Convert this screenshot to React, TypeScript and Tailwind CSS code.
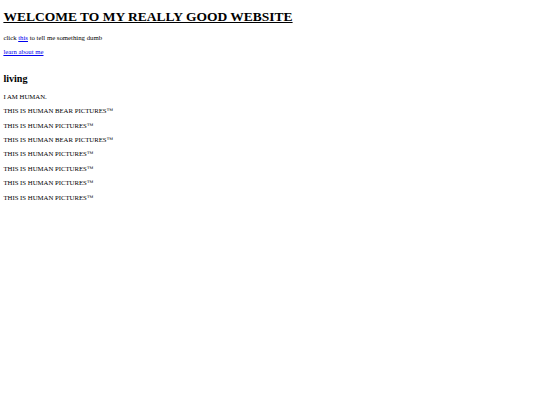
export default function App() {
  const items = [
    "I AM HUMAN.",
    "THIS IS HUMAN BEAR PICTURES™",
    "THIS IS HUMAN PICTURES™",
    "THIS IS HUMAN BEAR PICTURES™",
    "THIS IS HUMAN PICTURES™",
    "THIS IS HUMAN PICTURES™",
    "THIS IS HUMAN PICTURES™",
    "THIS IS HUMAN PICTURES™",
  ];
  return (
    <div
      className="min-h-[405px] bg-white px-[3.4px] pt-[9px] text-black"
      style={{ fontFamily: '"Liberation Serif", "Times New Roman", serif' }}
    >
      <h1 className="mb-[9px] text-[13.5px] font-bold leading-[1.15] underline">
        WELCOME TO MY REALLY GOOD WEBSITE
      </h1>
      <p className="my-[6.75px] text-[6.75px] leading-[1.15]">
        click{" "}
        <a href="#" className="text-[#0000ee] underline">
          this
        </a>{" "}
        to tell me something dumb
      </p>
      <p className="mt-[6.75px] text-[6.75px] leading-[1.15]">
        <a href="#" className="text-[#0000ee] underline">
          learn about me
        </a>
        <br />
        <br />
      </p>
      <h2 className="mt-[9.6px] mb-[8.4px] text-[10.1px] font-bold leading-[1.15]">living</h2>
      {items.map((t, i) => (
        <p key={i} className="my-[6.6px] text-[6.75px] leading-[1.15]">
          {t}
        </p>
      ))}
    </div>
  );
}
